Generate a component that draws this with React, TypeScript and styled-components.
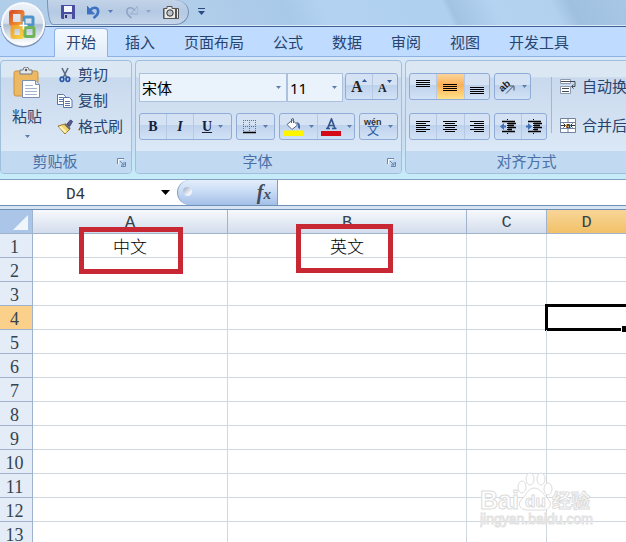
import React from "react";
import styled, { createGlobalStyle, css } from "styled-components";

const Global = createGlobalStyle`
  * { box-sizing: border-box; }
  html, body { margin: 0; height: 100%; overflow: hidden; }
  #root { height: 100%; }
  body { font-family: "Liberation Sans", "Noto Sans CJK SC", sans-serif; color: #27446f; }
  button, input, select { font: inherit; color: inherit; margin: 0; padding: 0; border: 0; background: none; }
  svg { display: block; flex: none; }
`;

const Page = styled.div`
  height: 100vh;
  display: flex;
  flex-direction: column;
  overflow: hidden;
  background: #fff;
`;

const Top = styled.header`
  position: relative;
  flex: none;
`;

const TitleBar = styled.div`
  height: 27px;
  display: flex;
  align-items: flex-start;
  padding-left: 47px;
  border-bottom: 1px solid #40608f;
  box-shadow: inset 0 -1px #dcebfa;
  background: linear-gradient(65deg, #b0cdea 0 34%, #a9c9e9 46%, #b3d2f1 52%, #b0d0ef 71%, #a3c3e3 72%, #b4d3f1 79%, #b2d1ef 88%, #a0c0e0 91%, #a8c7e5 100%);
`;

const QuickBar = styled.div`
  height: 25px;
  width: 142px;
  display: flex;
  align-items: center;
  gap: 12px;
  padding-left: 13px;
  border: 1px solid #7891b4;
  border-top: 0;
  border-radius: 0 14px 14px 6px / 0 12px 13px 24px;
  background: linear-gradient(#c3d3e8, #b4c9e3 50%, #c6d6ea);
`;

const IconButton = styled.button`
  display: flex;
  align-items: center;
  gap: 8px;
`;

const Customize = styled(IconButton)`
  margin: 8px 0 0 9px;
`;

const OfficeButton = styled.button`
  position: absolute;
  left: 0;
  top: 0;
`;

const Tabs = styled.nav`
  height: 30px;
  display: flex;
  align-items: flex-end;
  padding-left: 54px;
  background: #bfdbff;
  border-bottom: 1px solid #8db2e3;
`;

const Tab = styled.button<{ $active?: boolean }>`
  flex: none;
  height: 28px;
  padding: 0 12px;
  margin-right: 3px;
  font-size: 15px;
  line-height: 26px;
  border: 1px solid transparent;
  border-bottom: 0;
  ${(p) => p.$active && css`
    height: 29px;
    margin-bottom: -1px;
    padding: 0 11px;
    margin-right: 4px;
    line-height: 28px;
    border-color: #8db2e3;
    border-radius: 4px 4px 0 0;
    background: linear-gradient(#f4f9ff, #e1ecf8);
  `}
`;

const Ribbon = styled.div`
  height: 123px;
  display: flex;
  gap: 3px;
  padding: 3px 0 5px;
  background: linear-gradient(#d9e8f8, #c8dcf2 60%, #c6ecf9);
  border-bottom: 1px solid #84a0c0;
  overflow: hidden;
`;

const Group = styled.section<{ $width?: number }>`
  flex: ${(p) => (p.$width ? `0 0 ${p.$width}px` : "1 0 248px")};
  display: flex;
  flex-direction: column;
  border: 1px solid #9fbfdb;
  border-radius: 4px;
  overflow: hidden;
  background: linear-gradient(#dce7f4 0 14%, #c9d9ed 15%, #d5e3f3 60%, #e1edfa);
`;

const GroupBody = styled.div`
  flex: 1;
  display: flex;
  flex-direction: column;
  gap: 13px;
  padding: 12px 3px 0;
`;

const ClipBody = styled.div`
  flex: 1;
  display: flex;
  gap: 14px;
  padding: 1px 0 0 10px;
`;

const GroupFoot = styled.footer`
  height: 22px;
  display: flex;
  align-items: center;
  padding: 0 5px 0 0;
  background: #c1d9f1;
  color: #4a70a8;
  font-size: 15px;
  line-height: 22px;
  span { flex: 1; text-align: center; }
  button { margin-left: 8px; }
`;

const Paste = styled.button`
  display: flex;
  flex-direction: column;
  align-items: center;
  width: 32px;
  padding-top: 5px;
  font-size: 15px;
  line-height: 20px;
  gap: 8px;
`;

const Stack = styled.div`
  display: flex;
  flex-direction: column;
`;

const TextButton = styled.button`
  display: flex;
  align-items: center;
  gap: 5px;
  height: 26px;
  font-size: 15px;
  line-height: 20px;
  white-space: nowrap;
`;

const Line = styled.div`
  display: flex;
  gap: 4px;
  height: 27px;
`;

const Combo = styled.label<{ $width: number }>`
  display: flex;
  align-items: center;
  width: ${(p) => p.$width}px;
  height: 29px;
  margin-right: -4px;
  padding: 0 5px 0 2px;
  border: 1px solid #abc1de;
  background: #eaf2fb;
  color: #000;
  font: 15px/20px "Noto Sans", "Noto Sans CJK SC", sans-serif;
  input { flex: 1; min-width: 0; outline: 0; }
`;

const Cluster = styled.div<{ $push?: boolean }>`
  display: flex;
  height: 27px;
  margin-left: ${(p) => (p.$push ? 2 : 0)}px;
  border: 1px solid #8facd6;
  border-radius: 3px;
  background: linear-gradient(#d5e2f3 0 45%, #bfd2ec 46%, #d2e2f6);
`;

const Tool = styled.button<{ $width: number; $active?: boolean }>`
  width: ${(p) => p.$width}px;
  display: flex;
  align-items: center;
  justify-content: center;
  gap: 6px;
  & + & { border-left: 1px solid #b5c8e4; }
  ${(p) => p.$active && css`background: linear-gradient(#fbd49b, #fdb155 45%, #ffe28b);`}
`;

const Letter = styled.span<{ $size: number; $italic?: boolean; $underline?: boolean }>`
  font-family: "Liberation Serif", serif;
  font-weight: bold;
  font-size: ${(p) => p.$size}px;
  line-height: 20px;
  color: #14203a;
  font-style: ${(p) => (p.$italic ? "italic" : "normal")};
  text-decoration: ${(p) => (p.$underline ? "underline" : "none")};
`;

const AlignBody = styled.div`
  flex: 1;
  display: flex;
  padding: 12px 0 0 3px;
  gap: 4px;
`;

const AlignTools = styled(Stack)`
  gap: 13px;
`;

const Divider = styled.div`
  width: 1px;
  height: 56px;
  margin-top: 4px;
  background: #9db8da;
`;

const Wraps = styled(Stack)`
  gap: 13px;
  padding: 1px 0 0 4px;
`;

const FormulaRow = styled.div`
  flex: none;
  display: flex;
  height: 26px;
  border-bottom: 1px solid #6f8fb5;
`;

const NameBox = styled.label`
  display: flex;
  align-items: center;
  width: 177px;
  padding-right: 7px;
  background: #fff;
  color: #333;
  input {
    flex: 1;
    min-width: 0;
    padding: 4px 10px 0 0;
    text-align: center;
    outline: 0;
    font: 16px/20px "Liberation Mono", monospace;
  }
`;

const FxArea = styled.div`
  display: flex;
  align-items: center;
  justify-content: space-between;
  width: 101px;
  padding: 0 6px 0 5px;
  border: 1px solid #7f9dc4;
  border-width: 0 1px 0 1px;
  border-radius: 13px 0 0 13px;
  background: linear-gradient(#e5eefb, #c9dcf5 45%, #a3bfe8);
`;

const Knob = styled.span`
  width: 9px;
  height: 9px;
  margin-bottom: 2px;
  border-radius: 50%;
  background: linear-gradient(135deg, #98a7bd, #f1f5fb 70%);
`;

const FxButton = styled.button`
  font: italic bold 20px/22px "Liberation Serif", serif;
  color: #454c5a;
  small { font-size: 15px; }
`;

const FormulaInput = styled.input`
  flex: 1;
  min-width: 0;
  outline: 0;
`;

const Sheet = styled.main`
  position: relative;
  flex: 1;
  min-height: 0;
  overflow: hidden;
  border-top: 3px solid #d6e4f3;
`;

const Grid = styled.table`
  table-layout: fixed;
  width: 627px;
  min-width: 100%;
  border-collapse: separate;
  border-spacing: 0;
  border-top: 1px solid #6f8fb5;
`;

const Col = styled.col<{ $width?: number }>`
  ${(p) => p.$width && `width: ${p.$width}px;`}
`;

const HeadCell = styled.th<{ $active?: boolean }>`
  height: 24px;
  padding: 3px 0 0;
  font: 17px/20px "Liberation Mono", monospace;
  color: #35434f;
  border-right: 1px solid #9fb3cc;
  border-bottom: 1px solid #9fb3cc;
  background: ${(p) => (p.$active ? "linear-gradient(#f8d597, #f2c168)" : "linear-gradient(#f6f9fc, #d4dded)")};
`;

const Corner = styled.th`
  padding: 0;
  border-right: 1px solid #9fb3cc;
  border-bottom: 1px solid #9fb3cc;
  background: #abc5e9;
  svg { margin: 2px 0 0 12px; }
`;

const RowHead = styled.th<{ $active?: boolean }>`
  height: 24px;
  padding: 3px 3px 0 0;
  font: 18px/20px "Liberation Serif", serif;
  color: #35434f;
  border-right: 1px solid #9fb3cc;
  border-bottom: 1px solid #9fb3cc;
  background: ${(p) => (p.$active ? "#fbd08a" : "#e4ecf7")};
`;

const Cell = styled.td`
  position: relative;
  height: 24px;
  padding: 0;
  text-align: center;
  color: #000;
  font: 17px/22px "Noto Sans CJK SC", sans-serif;
  font-weight: 300;
  border-right: 1px solid #d0d7e0;
  border-bottom: 1px solid #d0d7e0;
`;

const Selection = styled.div`
  position: absolute;
  inset: -2px -3px -2px -2px;
  border: 3px solid #000;
  &::after {
    content: "";
    position: absolute;
    right: -2px;
    bottom: -4px;
    width: 6px;
    height: 6px;
    background: #000;
    border: 1px solid #fff;
    border-width: 1px 0 0 1px;
  }
`;

const Mark = styled.div<{ $left: number; $top: number; $width: number; $height: number }>`
  position: absolute;
  left: ${(p) => p.$left}px;
  top: ${(p) => p.$top}px;
  width: ${(p) => p.$width}px;
  height: ${(p) => p.$height}px;
  border: 5px solid #c82833;
  z-index: 2;
`;

const Watermark = styled.svg`
  position: absolute;
  right: 32px;
  bottom: 12px;
  z-index: 3;
`;

const Arrow = ({ color = "#5a7cac" }: { color?: string }) => (
  <svg width="5" height="4"><path d="M0 0h5L2.5 3z" fill={color} /></svg>
);

const OfficeLogo = () => (
  <svg width="48" height="50" viewBox="0 0 48 50">
    <defs>
      <linearGradient id="orb" x2="0" y2="1">
        <stop stopColor="#eef3fa" /><stop offset=".48" stopColor="#d5dfec" />
        <stop offset=".52" stopColor="#aebfd5" /><stop offset="1" stopColor="#fff" />
      </linearGradient>
      <linearGradient id="or" x2="1" y2="1"><stop stopColor="#d8542c" /><stop offset="1" stopColor="#f59b35" /></linearGradient>
      <linearGradient id="ye" x2="1" y2="1"><stop stopColor="#eda42e" /><stop offset="1" stopColor="#f6cf45" /></linearGradient>
    </defs>
    <circle cx="23" cy="25" r="22.5" fill="#8197b7" />
    <circle cx="23" cy="24" r="22" fill="#f8fafd" />
    <circle cx="23" cy="24" r="20" fill="url(#orb)" />
    <g fill="none" strokeLinejoin="round">
      <rect x="11" y="12" width="11.5" height="12" rx="1" stroke="url(#or)" strokeWidth="4" />
      <rect x="24" y="17" width="9" height="8" rx="1" stroke="#4f94c8" strokeWidth="3" />
      <rect x="12.5" y="27" width="9.5" height="10" rx="1" stroke="url(#ye)" strokeWidth="4" />
      <rect x="25" y="27.5" width="9" height="9" rx="1" stroke="#70b457" strokeWidth="3" />
    </g>
    <path d="M19.5 25.500h8M23.5 21.500v8" stroke="#fff" strokeWidth="1.5" />
  </svg>
);

const SaveIcon = () => (
  <svg width="14" height="14" viewBox="0 0 14 14">
    <path d="M0 0h14v14H1l-1-1z" fill="#484da0" /><path d="M3 1h8v6H3z" fill="#f3f6fc" />
    <path d="M3 9h8v5H3z" fill="#b9c2dd" /><path d="M4 10h2v3H4z" fill="#343777" />
  </svg>
);
const UndoIcon = ({ color, flip }: { color: string; flip?: boolean }) => (
  <svg width="13" height="14" viewBox="0 0 13 14">
    <g transform={flip ? "translate(13 0) scale(-1 1)" : undefined}>
      <path d="M3 5.500C6 1.500 11.200 2 11.200 6.500 11.200 10 8.500 11.500 6.500 13" fill="none" stroke={color} strokeWidth={flip ? 1.6 : 2.6} />
      <path d="M0 1v8h7.500z" fill={flip ? "none" : color} stroke={color} strokeWidth=".8" />
    </g>
  </svg>
);
const CameraIcon = () => (
  <svg width="16" height="13" viewBox="0 0 16 13">
    <path d="M.5 2.500H4v-2h5v2h6.500v10H.5z" fill="#e9e9e5" stroke="#555" />
    <circle cx="7" cy="7" r="3.2" fill="#bcc4cc" stroke="#333" /><path d="M12 3h2v9h-2z" fill="#555" /><path d="M1 3h1v9H1z" fill="#999" />
  </svg>
);
const PasteIcon = () => (
  <svg width="28" height="32" viewBox="0 0 28 32">
    <rect x="1" y="4" width="24" height="25" rx="2" fill="#edb862" stroke="#c99343" />
    <path d="M7 3h3q0-3 3-3t3 3h3v4H7z" fill="#e4e6e8" stroke="#737b86" /><circle cx="13" cy="3" r="1.2" fill="#555" />
    <path d="M9.5 13.500h13l4 4v13h-17z" fill="#fff" stroke="#7a8fb0" /><path d="M22.5 13.500v4h4" fill="#d5e0ef" stroke="#7a8fb0" />
    <path d="M12 18.500h8M12 21.500h12M12 24.500h12M12 27.500h12" stroke="#a2b4cf" />
  </svg>
);
const ScissorsIcon = () => (
  <svg width="16" height="16" viewBox="0 0 16 16" fill="none">
    <path d="M5 1l4.500 9M11 1L6.500 10" stroke="#5d6c85" strokeWidth="1.6" />
    <ellipse cx="5" cy="12.3" rx="1.8" ry="2.2" stroke="#2857a6" strokeWidth="1.7" /><ellipse cx="10.8" cy="12.3" rx="1.8" ry="2.2" stroke="#2857a6" strokeWidth="1.7" />
  </svg>
);
const CopyIcon = () => (
  <svg width="16" height="16" viewBox="0 0 16 16" fill="#fff" stroke="#5874a8">
    <path d="M.5 1.500h6l2 2v8h-8z" /><path d="M2 4.500h4M2 6.500h4M2 8.500h4" />
    <path d="M6.5 4.500h6l2.500 2.500v7.500H6.500z" /><path d="M8 8.500h5M8 10.500h5M8 12.500h5" />
  </svg>
);
const BrushIcon = () => (
  <svg width="16" height="16" viewBox="0 0 16 16">
    <path d="M10 5l3.500-4 2 1.500-3 5z" fill="#5b5d92" stroke="#3f426e" /><path d="M1 7l7-2 5 5-5 5z" fill="#f3d36c" stroke="#9c7c35" />
    <path d="M2 8l6 6 2-1-6-6z" fill="#fff3b8" /><path d="M8 5l5 5" stroke="#666" strokeWidth="2" />
  </svg>
);
const Launcher = () => (
  <svg width="9" height="9" viewBox="0 0 9 9" fill="none">
    <path d="M.5 6V.5H7M4 8.500h4.500V4" stroke="#6886b3" /><path d="M3 3l4 4M7 4v3H4" stroke="#6886b3" /><path d="M1.500 6V1.500H6" stroke="#fff" />
  </svg>
);
const BorderIcon = () => (
  <svg width="14" height="14" viewBox="0 0 14 14">
    <path d="M.5 0v12M6.500 0v12M12.500 0v12M0 .5h13M0 6.500h13" stroke="#62708c" strokeDasharray="1 1" /><path d="M0 12.500h13" stroke="#000" strokeWidth="1.5" />
  </svg>
);
const BucketIcon = () => (
  <svg width="20" height="18" viewBox="0 0 20 18">
    <path d="M4 6.500L9.500 2l5 5L9 11.500z" fill="#fff" stroke="#56657f" /><path d="M8.500 5V1q1.500-1.500 2 0v4" fill="none" stroke="#56657f" />
    <path d="M13 4q5 0 4 7-3-1-2-4z" fill="#416aa8" /><path d="M0 12.500h20V18H0z" fill="#fff500" />
  </svg>
);
const FontColorIcon = () => (
  <svg width="20" height="18" viewBox="0 0 20 18">
    <path d="M5 10.500h4M11 10.500h4.500M6.500 10.500L10.500 1l3.500 9.500M8 7.500h5" stroke="#36558f" strokeWidth="1.7" fill="none" /><path d="M0 13h20v5H0z" fill="#d40b16" />
  </svg>
);
const BarsIcon = ({ rows, inset }: { rows: number[]; inset?: "left" | "center" | "right" }) => (
  <svg width="15" height="18" viewBox="0 0 15 18">
    {rows.map((y, i) => {
      const w = inset && i % 2 ? 10 : 14;
      const x = inset === "right" ? 14 - w : inset === "left" ? 0 : (14 - w) / 2;
      return <rect key={y} x={x} y={y} width={w} height="1" fill="#000" />;
    })}
  </svg>
);
const IndentIcon = ({ right }: { right?: boolean }) => (
  <svg width="17" height="16" viewBox="0 0 17 16">
    <path d="M2 2.500h13M8 4.500h8M8 6.500h6M8 8.500h8M8 10.500h4M2 12.500h13" stroke="#000" strokeWidth="1.4" />
    <path d="M7.500 0v15" stroke="#000" strokeDasharray="1 1" />
    <path d={right ? "M6 7.500L2 4v2.500H0v2h2V11z" : "M0 7.500L4 4v2.500h2v2H4V11z"} fill="#416fb3" />
  </svg>
);
const OrientIcon = () => (
  <svg width="17" height="16" viewBox="0 0 17 16">
    <text x="1" y="11" transform="rotate(-42 5 9)" fontFamily="Liberation Sans" fontWeight="bold" fontSize="10" fill="#222">ab</text>
    <path d="M7 14.500l7-7M10.500 7H15v4.500" stroke="#40506c" fill="none" />
  </svg>
);
const WrapIcon = () => (
  <svg width="17" height="16" viewBox="0 0 17 16" fill="none">
    <path d="M.5.5h10v4H.5zM.5 7.500h10v7H.5z" fill="#fff" stroke="#8c99ac" /><path d="M1 2.500h14v5h-3M2 9.500h7M2 12.500h7M13.500 5.500l-2 2 2 2" stroke="#434a58" />
  </svg>
);
const MergeIcon = () => (
  <svg width="17" height="16" viewBox="0 0 17 16">
    <path d="M.5.5h15v14H.5zM.5 4.500h15M.5 10.500h15M8 .5v4M8 10.500v4" fill="#fff" stroke="#73829c" />
    <path d="M1 7.500h4M11 7.500h4M3.500 5.500l2 2-2 2M12.500 5.500l-2 2 2 2" stroke="#333" fill="none" />
    <text x="6" y="10" fontFamily="Liberation Sans" fontWeight="bold" fontSize="8" fill="#111">a</text>
  </svg>
);
const PhoneticIcon = () => (
  <svg width="18" height="20" viewBox="0 0 18 20" overflow="visible">
    <text x="0" y="8" fontFamily="Liberation Sans" fontWeight="bold" fontSize="9" fill="#333">wén</text>
    <text x="3" y="18" fontFamily="Noto Sans CJK SC" fontSize="12" fill="#2856a0">文</text>
  </svg>
);

const tabs = ["开始", "插入", "页面布局", "公式", "数据", "审阅", "视图", "开发工具"];
const columns = ["A", "B", "C", "D"];
const rowCount = 13;
const values: Record<string, string> = { A1: "中文", B1: "英文" };

export default function App() {
  return (
    <Page>
      <Global />
      <Top>
        <TitleBar>
          <QuickBar>
            <IconButton aria-label="保存"><SaveIcon /></IconButton>
            <IconButton aria-label="撤销"><UndoIcon color="#3e71c2" /><Arrow /></IconButton>
            <IconButton aria-label="恢复"><UndoIcon color="#8fa6c8" flip /><Arrow color="#8fa6c8" /></IconButton>
            <IconButton aria-label="照相机"><CameraIcon /></IconButton>
          </QuickBar>
          <Customize aria-label="自定义">
            <svg width="7" height="8"><path d="M0 .5h7" stroke="#294b80" /><path d="M0 3h7L3.500 7z" fill="#294b80" /></svg>
          </Customize>
        </TitleBar>
        <Tabs>
          {tabs.map((name, i) => <Tab key={name} $active={i === 0}>{name}</Tab>)}
        </Tabs>
        <OfficeButton aria-label="Office"><OfficeLogo /></OfficeButton>
      </Top>
      <Ribbon>
        <Group $width={132}>
          <ClipBody>
            <Paste><PasteIcon />粘贴<Arrow /></Paste>
            <Stack>
              <TextButton><ScissorsIcon />剪切</TextButton>
              <TextButton><CopyIcon />复制</TextButton>
              <TextButton><BrushIcon />格式刷</TextButton>
            </Stack>
          </ClipBody>
          <GroupFoot><span>剪贴板</span><IconButton aria-label="剪贴板选项"><Launcher /></IconButton></GroupFoot>
        </Group>
        <Group $width={267}>
          <GroupBody>
            <Line>
              <Combo $width={148}><input aria-label="字体" defaultValue="宋体" /><Arrow /></Combo>
              <Combo $width={56}><input aria-label="字号" defaultValue="11" /><Arrow /></Combo>
              <Cluster $push>
                <Tool $width={26} aria-label="增大字号"><svg width="16" height="20"><text x="0" y="15" fontFamily="Liberation Serif" fontWeight="bold" fontSize="16" fill="#222">A</text><path d="M11 5h5l-2.500-3z" fill="#31569a" /></svg></Tool>
                <Tool $width={25} aria-label="减小字号"><svg width="15" height="20"><text x="0" y="15" fontFamily="Liberation Serif" fontWeight="bold" fontSize="12" fill="#222">A</text><path d="M9 3h5l-2.500 3z" fill="#31569a" /></svg></Tool>
              </Cluster>
            </Line>
            <Line>
              <Cluster>
                <Tool $width={26}><Letter $size={14}>B</Letter></Tool>
                <Tool $width={27}><Letter $size={14} $italic>I</Letter></Tool>
                <Tool $width={38}><Letter $size={14} $underline>U</Letter><Arrow /></Tool>
              </Cluster>
              <Cluster><Tool $width={37} aria-label="边框"><BorderIcon /><Arrow /></Tool></Cluster>
              <Cluster>
                <Tool $width={37} aria-label="填充颜色"><BucketIcon /><Arrow /></Tool>
                <Tool $width={37} aria-label="字体颜色"><FontColorIcon /><Arrow /></Tool>
              </Cluster>
              <Cluster><Tool $width={37} aria-label="拼音"><PhoneticIcon /><Arrow /></Tool></Cluster>
            </Line>
          </GroupBody>
          <GroupFoot><span>字体</span><IconButton aria-label="字体选项"><Launcher /></IconButton></GroupFoot>
        </Group>
        <Group>
          <AlignBody>
            <AlignTools>
              <Line>
                <Cluster>
                  <Tool $width={26} aria-label="顶端对齐"><BarsIcon rows={[2, 4, 6, 8]} /></Tool>
                  <Tool $width={28} $active aria-label="垂直居中"><BarsIcon rows={[6, 8, 10, 12]} /></Tool>
                  <Tool $width={25} aria-label="底端对齐"><BarsIcon rows={[9, 11, 13, 15]} /></Tool>
                </Cluster>
                <Cluster><Tool $width={35} aria-label="方向"><OrientIcon /><Arrow /></Tool></Cluster>
              </Line>
              <Line>
                <Cluster>
                  <Tool $width={26} aria-label="左对齐"><BarsIcon inset="left" rows={[3, 5, 7, 9, 11, 13]} /></Tool>
                  <Tool $width={28} aria-label="居中"><BarsIcon inset="center" rows={[3, 5, 7, 9, 11, 13]} /></Tool>
                  <Tool $width={25} aria-label="右对齐"><BarsIcon inset="right" rows={[3, 5, 7, 9, 11, 13]} /></Tool>
                </Cluster>
                <Cluster>
                  <Tool $width={26} aria-label="减少缩进"><IndentIcon /></Tool>
                  <Tool $width={25} aria-label="增加缩进"><IndentIcon right /></Tool>
                </Cluster>
              </Line>
            </AlignTools>
            <Divider />
            <Wraps>
              <TextButton><WrapIcon />自动换</TextButton>
              <TextButton><MergeIcon />合并后</TextButton>
            </Wraps>
          </AlignBody>
          <GroupFoot><span>对齐方式</span></GroupFoot>
        </Group>
      </Ribbon>
      <FormulaRow>
        <NameBox>
          <input aria-label="名称框" defaultValue="D4" />
          <svg width="9" height="5"><path d="M0 0h9L4.500 5z" fill="#000" /></svg>
        </NameBox>
        <FxArea><Knob /><FxButton>f<small>x</small></FxButton></FxArea>
        <FormulaInput aria-label="编辑栏" />
      </FormulaRow>
      <Sheet>
        <Grid>
          <colgroup><Col $width={33} /><Col $width={195} /><Col $width={239} /><Col $width={80} /><Col /></colgroup>
          <thead>
            <tr>
              <Corner aria-label="全选"><svg width="17" height="16"><path d="M16 0v15H1z" fill="#f0f5fc" /></svg></Corner>
              {columns.map((c) => <HeadCell key={c} $active={c === "D"}>{c}</HeadCell>)}
            </tr>
          </thead>
          <tbody>
            {Array.from({ length: rowCount }, (_, i) => i + 1).map((r) => (
              <tr key={r}>
                <RowHead $active={r === 4}>{r}</RowHead>
                {columns.map((c) => (
                  <Cell key={c}>
                    {values[c + r]}
                    {c + r === "A1" && <Mark $left={46} $top={-7} $width={104} $height={47} />}
                    {c + r === "B1" && <Mark $left={68} $top={-10} $width={97} $height={49} />}
                    {c + r === "D4" && <Selection />}
                  </Cell>
                ))}
              </tr>
            ))}
          </tbody>
        </Grid>
        <Watermark width="114" height="58" viewBox="0 0 114 58" fill="#fff" stroke="#dcdcdc">
          <g fontFamily="Liberation Sans" fontWeight="bold" fontSize="25" strokeWidth="1">
            <text x="0" y="37">Bai</text>
            <ellipse cx="42" cy="15" rx="4" ry="6" /><ellipse cx="50" cy="7" rx="4" ry="6" /><ellipse cx="61" cy="7" rx="4" ry="6" /><ellipse cx="68" cy="17" rx="4" ry="6" />
            <path d="M54 16c-6 0-8 8-13 12-4 5 0 10 6 10h16c7 0 9-6 6-10-5-4-8-12-15-12z" />
            <text x="45" y="35" fontSize="17">du</text>
            <text x="72" y="36" fontSize="19" fontFamily="Noto Sans CJK SC">经验</text>
          </g>
          <text x="0" y="52" stroke="#e2e2e2" strokeWidth="1" fontFamily="Liberation Sans" fontSize="14">jingyan.baidu.com</text>
        </Watermark>
      </Sheet>
    </Page>
  );
}
